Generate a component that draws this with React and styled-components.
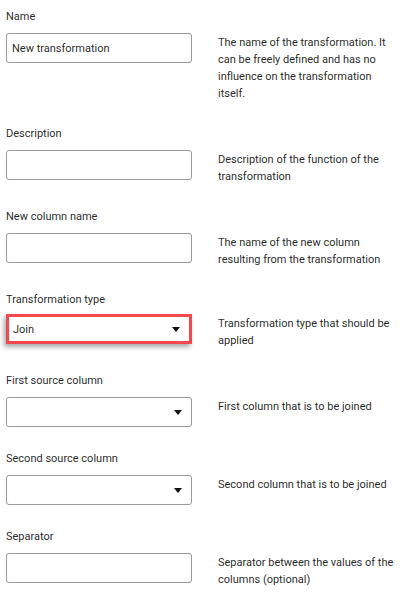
import React from "react";
import styled, { createGlobalStyle } from "styled-components";

const Global = createGlobalStyle`
  html, body { margin: 0; padding: 0; background: #fff; }
  body { font-family: Roboto, "Noto Sans", Arial, sans-serif; color: rgba(0,0,0,0.87); }
`;

const Page = styled.div`
  padding: 9px 6px 0 6px;
  display: flex;
  flex-direction: column;
  gap: 24px;
`;

const Field = styled.div`
  display: grid;
  grid-template-columns: 186px 1fr;
  column-gap: 26px;
  row-gap: ${p => (p.$tight ? "6px" : "8px")};
  align-items: start;
`;

const Label = styled.div`
  grid-column: 1 / 3;
  font-size: 11px;
  line-height: 16px;
  color: rgba(0,0,0,0.87);
`;

const Control = styled.div`
  box-sizing: border-box;
  height: 30px;
  display: flex;
  align-items: center;
  justify-content: space-between;
  padding: 0 9px 0 ${p => (p.$highlight ? "4px" : "5px")};
  border: ${p => (p.$highlight ? "3px solid #f5474c" : "1px solid #9a9a9a")};
  border-radius: ${p => (p.$highlight ? "0" : "3px")};
  box-shadow: ${p => (p.$highlight ? "-2px 3px 5px rgba(0,0,0,0.35)" : "none")};
  font-size: 11px;
  color: rgba(0,0,0,0.87);
  background: #fff;
`;

const Arrow = styled.span`
  width: 0;
  height: 0;
  border-left: 4.5px solid transparent;
  border-right: 4.5px solid transparent;
  border-top: 5px solid #111;
  margin-left: auto;
`;

const Help = styled.div`
  font-size: 11px;
  line-height: 17px;
  color: rgba(0,0,0,0.87);
  max-width: 180px;
  padding-top: 1px;
`;

const fields = [
  { label: "Name", value: "New transformation", help: "The name of the transformation. It can be freely defined and has no influence on the transformation itself." },
  { label: "Description", value: "", help: "Description of the function of the transformation" },
  { label: "New column name", value: "", help: "The name of the new column resulting from the transformation" },
  { label: "Transformation type", value: "Join", select: true, highlight: true, help: "Transformation type that should be applied" },
  { label: "First source column", value: "", select: true, help: "First column that is to be joined" },
  { label: "Second source column", value: "", select: true, help: "Second column that is to be joined" },
  { label: "Separator", value: "", help: "Separator between the values of the columns (optional)" },
];

export default function App() {
  return (
    <>
      <Global />
      <Page>
        {fields.map(f => (
          <Field key={f.label} $tight={f.highlight}>
            <Label>{f.label}</Label>
            <Control $highlight={f.highlight}>
              <span>{f.value}</span>
              {f.select && <Arrow />}
            </Control>
            <Help>{f.help}</Help>
          </Field>
        ))}
      </Page>
    </>
  );
}
